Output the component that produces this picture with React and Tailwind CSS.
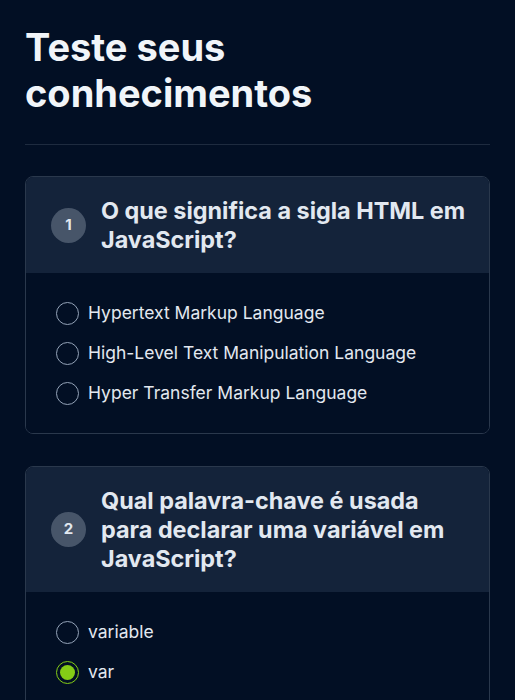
import { useState } from "react";

const questions = [
  {
    id: 1,
    text: "O que significa a sigla HTML em JavaScript?",
    options: [
      "Hypertext Markup Language",
      "High-Level Text Manipulation Language",
      "Hyper Transfer Markup Language",
    ],
    selected: null,
  },
  {
    id: 2,
    text: "Qual palavra-chave é usada para declarar uma variável em JavaScript?",
    options: ["variable", "var", "let", "const"],
    selected: 1,
  },
];

function Question({ q }) {
  const [picked, setPicked] = useState(q.selected);

  return (
    <div className="rounded-lg border border-[#2a384c] overflow-hidden">
      {/* header */}
      <div className="flex items-center gap-[15px] bg-[#14233a] pl-[25px] pr-[14px] py-[19px]">
        <span className="flex h-[35px] w-[35px] shrink-0 items-center justify-center rounded-full bg-[#475569] text-[15px] font-bold text-[#e2e8f0]">
          {q.id}
        </span>
        <h2 className="text-[23.4px] font-bold leading-[29px] text-[#e2e8f0]">{q.text}</h2>
      </div>

      {/* options */}
      <div className="flex flex-col gap-[16px] bg-[#020f24] px-[30px] py-[28px]">
        {q.options.map((opt, i) => (
          <label key={opt} className="flex items-center gap-[9px] cursor-pointer" onClick={() => setPicked(i)}>
            <span
              className={`flex h-[23px] w-[23px] items-center justify-center rounded-full border-[1.5px] ${
                picked === i ? "border-[#84cc16]" : "border-[#94a3b8]"
              }`}
            >
              {picked === i && <span className="h-[15px] w-[15px] rounded-full bg-[#84cc16]" />}
            </span>
            <span className="text-[17.5px] leading-[24px] text-[#e2e8f0]">{opt}</span>
          </label>
        ))}
      </div>
    </div>
  );
}

export default function App() {
  return (
    <div
      className="min-h-screen bg-[#020f24] px-[25px] pt-[24px] pb-10"
      style={{ fontFamily: "Inter, 'Noto Sans', sans-serif" }}
    >
      {/* Title */}
      <h1 className="text-[38px] font-bold leading-[46px] text-[#f1f5f9]">Teste seus conhecimentos</h1>

      <hr className="mt-[28px] mb-[31px] border-[#1e2b3f]" />

      {/* Questions */}
      <div className="flex flex-col gap-[32px]">
        {questions.map((q) => (
          <Question key={q.id} q={q} />
        ))}
      </div>
    </div>
  );
}
